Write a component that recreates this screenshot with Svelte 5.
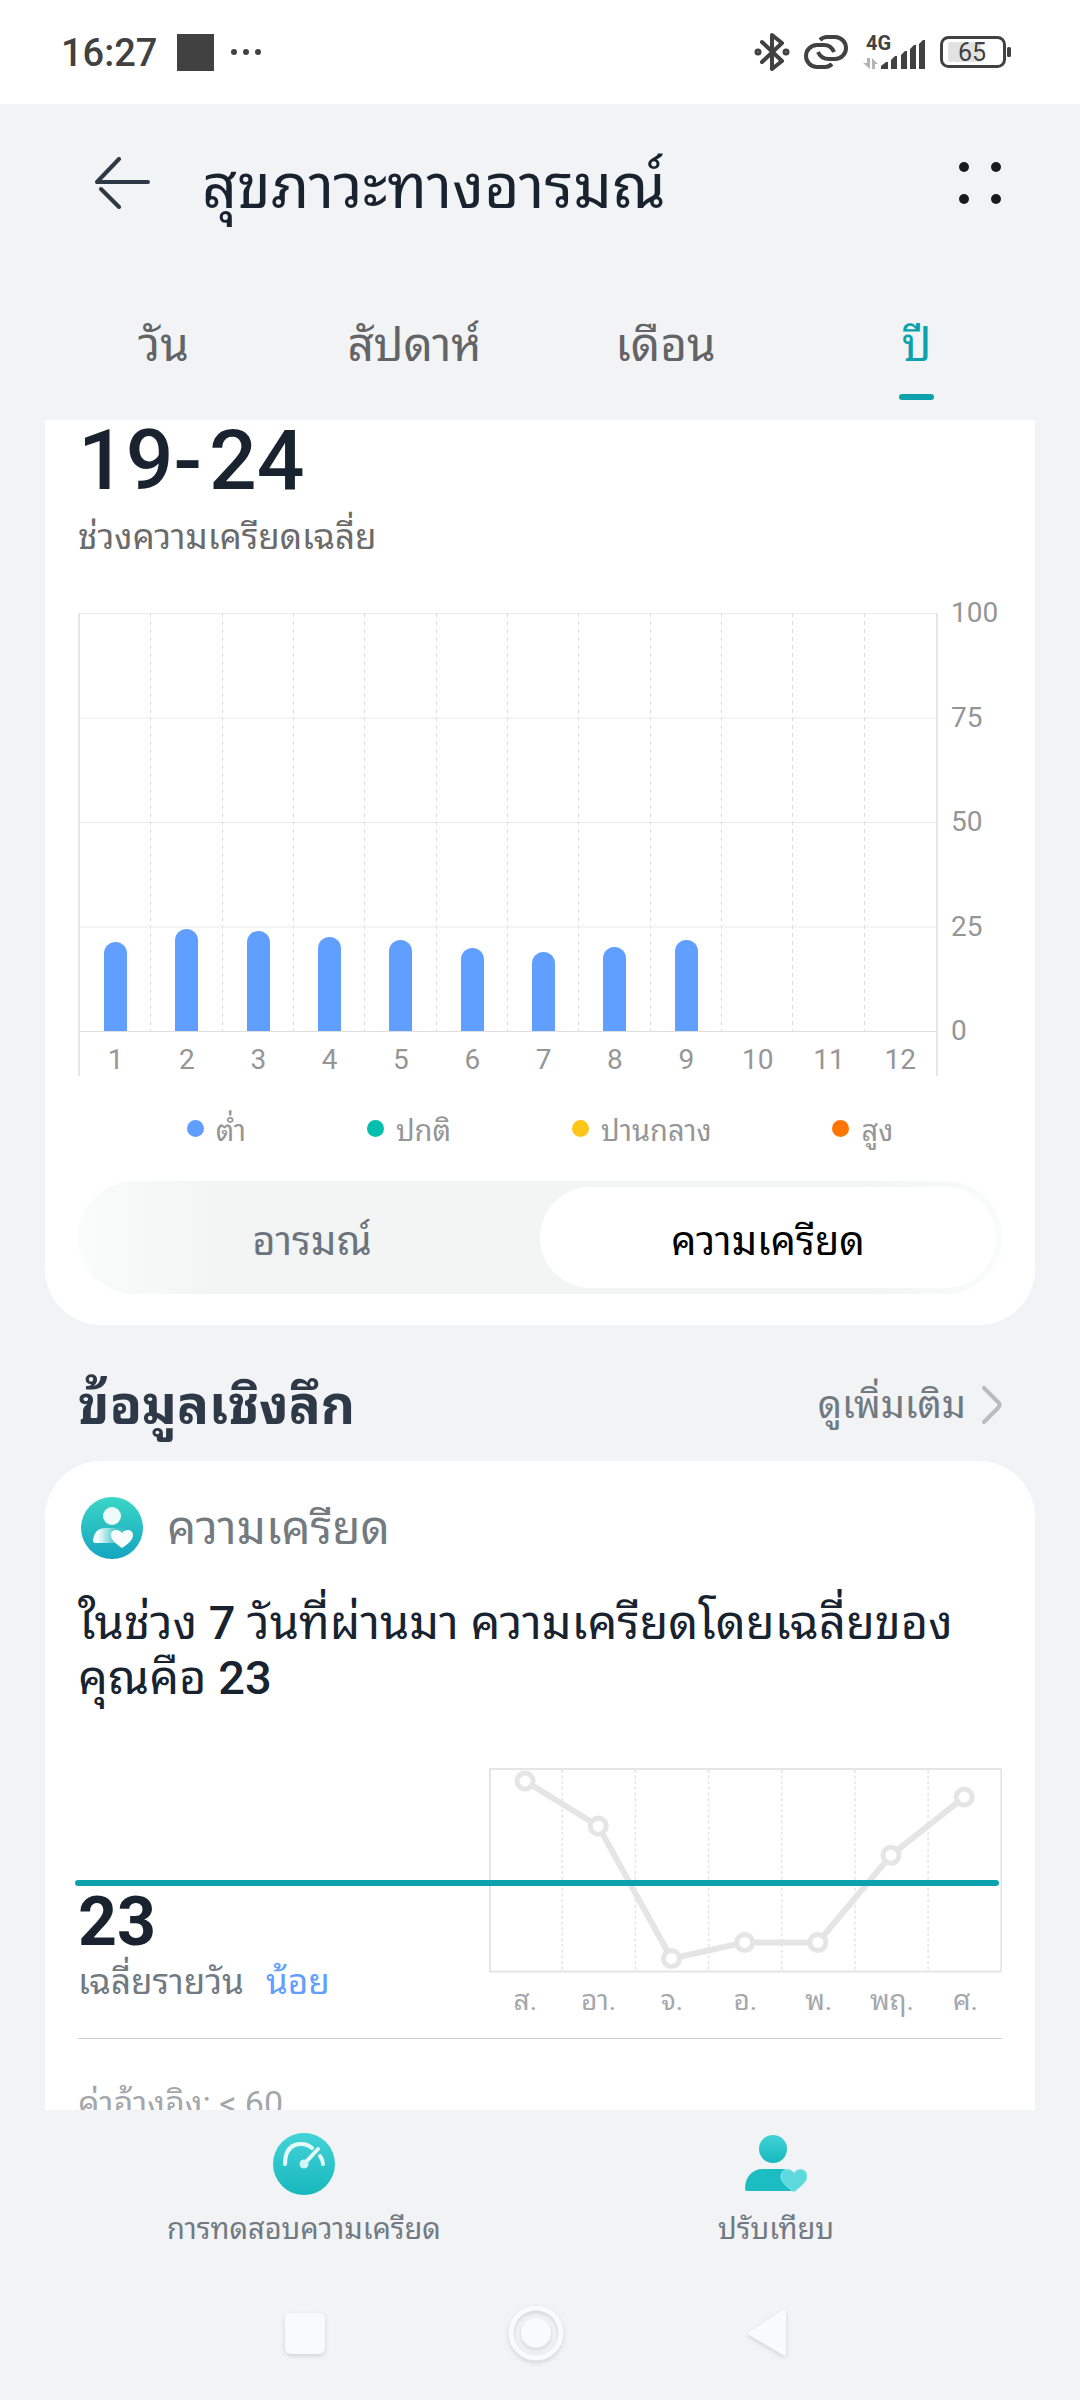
<script>
  const tabs = ['วัน', 'สัปดาห์', 'เดือน', 'ปี'];
  let activeTab = $state(3);

  const maxStress = 100;
  const months = [
    { label: '1', value: 21.4 },
    { label: '2', value: 24.3 },
    { label: '3', value: 23.9 },
    { label: '4', value: 22.5 },
    { label: '5', value: 21.7 },
    { label: '6', value: 19.8 },
    { label: '7', value: 18.8 },
    { label: '8', value: 20 },
    { label: '9', value: 21.7 },
    { label: '10', value: 0 },
    { label: '11', value: 0 },
    { label: '12', value: 0 }
  ];
  const ticks = [100, 75, 50, 25, 0];

  const levels = [
    { label: 'ต่ำ', tone: 'low' },
    { label: 'ปกติ', tone: 'normal' },
    { label: 'ปานกลาง', tone: 'medium' },
    { label: 'สูง', tone: 'high' }
  ];

  const modes = ['อารมณ์', 'ความเครียด'];
  let activeMode = $state(1);

  const week = [
    { label: 'ส.', x: 36, y: 13 },
    { label: 'อา.', x: 109, y: 58 },
    { label: 'จ.', x: 182, y: 190 },
    { label: 'อ.', x: 255, y: 174 },
    { label: 'พ.', x: 328, y: 174 },
    { label: 'พฤ.', x: 401, y: 87 },
    { label: 'ศ.', x: 474, y: 29 }
  ];
  const weekLine = week.map((d) => `${d.x},${d.y}`).join(' ');
  const weekGrid = [73, 146, 219, 292, 365, 438];
</script>

<div class="app">
  <div class="status">
    <div class="status-left">
      <span class="clock">16:27</span>
      <span class="block"></span>
      <svg width="32" height="8" viewBox="0 0 32 8" fill="#414141">
        <circle cx="4" cy="4" r="3" /><circle cx="16" cy="4" r="3" /><circle cx="28" cy="4" r="3" />
      </svg>
    </div>
    <div class="status-right">
      <svg width="36" height="40" viewBox="0 0 36 40" fill="none" stroke="#414141" stroke-width="4" stroke-linejoin="round" stroke-linecap="round">
        <path d="M8 10 L28 29 L18 37 V3 L28 11 L8 30" />
        <circle cx="4" cy="20" r="1.5" /><circle cx="32" cy="20" r="1.5" />
      </svg>
      <svg width="44" height="34" viewBox="0 0 44 34" fill="none" stroke="#414141" stroke-width="4">
        <path d="M16 5 Q19 2 23 2 H31 A11 11 0 0 1 31 24 H25 Q17 24 14 17" />
        <path d="M28 29 Q25 32 21 32 H13 A11 11 0 0 1 13 10 H20 Q27 10 30 17" />
      </svg>
      <div class="signal">
        <svg width="64" height="34" viewBox="0 0 64 34" fill="#414141">
          <path fill="#b4b4b4" d="M5 23h3v11L1 28h4zM10 34V23l6 6h-3v5z" />
          <path d="M19 34v-3l5-4h2v7zM29 34V25l4-4h2v13zM39 34V20l4-4h2v18zM48 34V14l4-4h2v24zM57 34V9l4-4h2v29z" />
        </svg>
        <span class="net">4G</span>
      </div>
      <div class="battery">
        <svg width="72" height="32" viewBox="0 0 72 32">
          <rect x="8" y="6" width="33" height="20" rx="2" fill="#e2e2e2" />
          <rect x="1.5" y="1.5" width="63" height="29" rx="7" fill="none" stroke="#414141" stroke-width="3" />
          <rect x="67" y="11" width="4" height="10" rx="1.5" fill="#414141" />
        </svg>
        <span class="charge">65</span>
      </div>
    </div>
  </div>

  <header class="header">
    <button class="icon-btn" aria-label="ย้อนกลับ">
      <svg width="56" height="52" viewBox="0 0 56 52" fill="none" stroke="#2e3945" stroke-width="4" stroke-linecap="round">
        <path d="M24 2 L2 25 H53" stroke-linejoin="round" /><path d="M6 32 L24 50" />
      </svg>
    </button>
    <h1>สุขภาวะทางอารมณ์</h1>
    <button class="icon-btn" aria-label="เมนู">
      <svg width="44" height="44" viewBox="0 0 44 44" fill="#1a1a1a">
        <circle cx="6" cy="6" r="5" /><circle cx="38" cy="6" r="5" /><circle cx="6" cy="38" r="5" /><circle cx="38" cy="38" r="5" />
      </svg>
    </button>
  </header>

  <nav class="tabs">
    {#each tabs as tab, i}
      <button class="tab" class:active={i === activeTab} onclick={() => (activeTab = i)}>
        <span>{tab}</span>
        <i></i>
      </button>
    {/each}
  </nav>

  <main class="content">
    <section class="card summary">
      <div class="range"><span>19-</span><span>24</span></div>
      <p class="caption">ช่วงความเครียดเฉลี่ย</p>

      <div class="chart">
        <div class="plot">
          <div class="bars">
            {#each months as m}
              <div class="slot">
                <div class="bar" style="height: {(m.value / maxStress) * 100}%"></div>
              </div>
            {/each}
          </div>
          <div class="months">
            {#each months as m}<span>{m.label}</span>{/each}
          </div>
        </div>
        <div class="scale">
          {#each ticks as t}<span>{t}</span>{/each}
        </div>
      </div>

      <ul class="legend">
        {#each levels as l}
          <li><i class={l.tone}></i>{l.label}</li>
        {/each}
      </ul>

      <div class="switch">
        {#each modes as mode, i}
          <button class:on={i === activeMode} onclick={() => (activeMode = i)}>{mode}</button>
        {/each}
      </div>
    </section>

    <div class="section-head">
      <h2>ข้อมูลเชิงลึก</h2>
      <a href="#insights">
        ดูเพิ่มเติม
        <svg width="20" height="38" viewBox="0 0 20 38" fill="none" stroke="#b9bcbf" stroke-width="4" stroke-linecap="round">
          <path d="M2 2 L16 16 Q19 19 16 22 L2 36" />
        </svg>
      </a>
    </div>

    <section class="card insight" id="insights">
      <div class="insight-head">
        <svg width="62" height="62" viewBox="0 0 62 62">
          <defs>
            <linearGradient id="disc" x1="0" y1="0" x2="0" y2="1">
              <stop offset="0" stop-color="#3bd6c6" /><stop offset="1" stop-color="#14a5c0" />
            </linearGradient>
            <linearGradient id="bust" x1="0" y1="0" x2="1" y2="0">
              <stop offset="0.15" stop-color="#f4fdfd" /><stop offset="0.75" stop-color="#f4fdfd" stop-opacity="0.1" />
            </linearGradient>
          </defs>
          <circle cx="31" cy="31" r="31" fill="url(#disc)" />
          <circle cx="31" cy="19" r="9" fill="#effbfb" />
          <path d="M12 44 Q13 31 25 31 H38 Q42 31 45 34 V46 H14 Q12 46 12 44Z" fill="url(#bust)" />
          <path d="M41 51 C34 46 30 43 30 38 C30 33 37 31 41 36 C45 31 52 33 52 38 C52 43 47 47 41 51Z" fill="#f8fefe" />
        </svg>
        <h3>ความเครียด</h3>
      </div>

      <p class="message">ในช่วง <b>7</b> วันที่ผ่านมา ความเครียดโดยเฉลี่ยของ<wbr /><span class="keep">คุณคือ <b>23</b></span></p>

      <div class="week">
        <div class="average">
          <strong>23</strong>
          <p>เฉลี่ยรายวัน <em>น้อย</em></p>
        </div>
        <div class="trend">
          <svg viewBox="0 0 512 204" fill="none" stroke="#e5e5e5">
            <rect x="1" y="1" width="510" height="202" stroke-width="2" />
            {#each weekGrid as x}
              <line x1={x} x2={x} y1="2" y2="202" stroke-width="1.5" stroke-dasharray="3 2.6" />
            {/each}
            <polyline points={weekLine} stroke-width="6" />
            {#each week as d}
              <circle cx={d.x} cy={d.y} r="8" fill="#fff" stroke-width="5" />
            {/each}
          </svg>
          <div class="days">
            {#each week as d}<span>{d.label}</span>{/each}
          </div>
        </div>
        <div class="mean-line"></div>
      </div>

      <p class="reference">ค่าอ้างอิง: &lt; 60</p>
    </section>
  </main>

  <footer>
    <div class="actions">
      <button>
        <svg width="62" height="62" viewBox="0 0 62 62">
          <defs>
            <linearGradient id="teal" x1="0" y1="0" x2="0" y2="1">
              <stop offset="0" stop-color="#42d3d8" /><stop offset="1" stop-color="#17b8be" />
            </linearGradient>
          </defs>
          <circle cx="31" cy="31" r="31" fill="url(#teal)" />
          <g fill="none" stroke="#e4fafa" stroke-width="4" stroke-linecap="round">
            <path d="M12 31 C12 8 31 8 39 15" /><path d="M47 23 Q50 27 50 31" />
            <path d="M32 30 L45 16" />
          </g>
          <circle cx="31" cy="31" r="4.5" fill="#d3f5f5" />
        </svg>
        การทดสอบความเครียด
      </button>
      <button>
        <svg width="62" height="62" viewBox="0 0 62 62">
          <circle cx="28" cy="16" r="14" fill="url(#teal)" />
          <path d="M0 56 C0 44 7 36 18 36 H40 L48 58 H2 Q0 58 0 56Z" fill="#1cbcc3" />
          <path d="M49 59 C41 53 36 49 36 43 C36 36 45 34 49 40 C53 34 62 36 62 43 C62 49 56 53 49 59Z" fill="#5dd8dc" stroke="#8fe6e8" stroke-width="1" />
        </svg>
        ปรับเทียบ
      </button>
    </div>
    <div class="system">
      <button aria-label="แอปล่าสุด">
        <svg width="60" height="60" viewBox="0 0 60 60"><rect x="10" y="9" width="40" height="41" rx="6" fill="#f9fafc" /></svg>
      </button>
      <button aria-label="หน้าหลัก">
        <svg width="60" height="60" viewBox="0 0 60 60">
          <circle cx="30" cy="29" r="25" fill="none" stroke="#f9fafc" stroke-width="5" /><circle cx="30" cy="29" r="15" fill="#f9fafc" />
        </svg>
      </button>
      <button aria-label="กลับ">
        <svg width="60" height="60" viewBox="0 0 60 60"><path d="M12 28 L46 6 Q49 5 49 8 V50 Q49 53 46 51 L12 31 Q10 30 12 28Z" fill="#f9fafc" /></svg>
      </button>
    </div>
  </footer>
</div>

<style>
  :global(body) {
    background: #f1f3f5;
  }
  .app {
    display: flex;
    flex-direction: column;
    height: 100vh;
    overflow: hidden;
    background: #f1f3f5;
    color: #18232f;
    font-family: Roboto, 'Noto Sans Thai Looped', 'Noto Looped Thai', Loma, 'Noto Sans Thai', 'Noto Sans', sans-serif;
  }
  h1, h2, h3, p, ul {
    margin: 0;
    padding: 0;
    font-weight: 400;
  }
  svg {
    display: block;
    flex: none;
  }
  button {
    padding: 0;
    border: 0;
    background: none;
    font: inherit;
    color: inherit;
  }

  .status {
    flex: none;
    display: flex;
    justify-content: space-between;
    align-items: center;
    height: 104px;
    padding: 0 68px 0 61px;
    background: #fff;
    color: #414141;
  }
  .status-left, .status-right {
    display: flex;
    align-items: center;
  }
  .clock {
    margin-right: 20px;
    font-size: 38px;
    line-height: 46px;
    padding-top: 2px;
    font-weight: 500;
  }
  .block {
    width: 37px;
    height: 37px;
    margin-right: 16px;
    background: #414141;
  }
  .status-right {
    gap: 14px;
  }
  .signal, .battery {
    position: relative;
  }
  .net {
    position: absolute;
    left: 4px;
    top: 0;
    font-size: 20px;
    line-height: 16px;
    font-weight: 700;
  }
  .charge {
    position: absolute;
    left: 0;
    top: 0;
    width: 64px;
    text-align: center;
    font-size: 25px;
    line-height: 34px;
  }

  .header {
    flex: none;
    display: flex;
    align-items: center;
    height: 158px;
    padding: 0 78px 0 95px;
  }
  h1 {
    flex: 1;
    padding: 8px 0 0 51px;
    font-size: 61px;
    line-height: 72px;
  }

  .tabs {
    flex: none;
    display: grid;
    grid-template-columns: repeat(4, 1fr);
    padding: 0 38px;
  }
  .tab {
    display: flex;
    flex-direction: column;
    align-items: center;
    gap: 21px;
    padding: 55px 0 20px;
    font-size: 46px;
    line-height: 56px;
    color: #636466;
  }
  .tab i {
    width: 35px;
    height: 6px;
    border-radius: 3px;
  }
  .tab.active {
    color: #0aa3ad;
  }
  .tab.active i {
    background: #0aa3ad;
  }

  .content {
    flex: 1;
    min-height: 0;
    overflow: hidden;
    padding: 0 45px;
  }
  .card {
    background: #fff;
    padding: 0 33px;
  }
  .summary {
    border-radius: 0 0 56px 56px;
    padding-bottom: 31px;
  }
  .range {
    display: flex;
    gap: 7px;
    font-size: 84px;
    line-height: 82px;
    font-weight: 500;
  }
  .caption {
    margin-top: 12px;
    font-size: 35px;
    line-height: 48px;
    color: #6b6b6b;
  }

  .chart {
    display: grid;
    grid-template-columns: 1fr 64px;
    margin-top: 35px;
    font-size: 28px;
    line-height: 32px;
    color: #969696;
  }
  .plot {
    margin-top: 16px;
    border: solid #e6e6e6;
    border-width: 0 2px;
  }
  .bars, .months {
    display: grid;
    grid-template-columns: repeat(12, 1fr);
  }
  .bars {
    height: 418px;
    background: linear-gradient(#ebebeb 0 1px, transparent 1px) 0 0 / 100% 25%;
    border-bottom: 1px solid #dedede;
  }
  .slot {
    display: flex;
    align-items: flex-end;
    justify-content: center;
    background: repeating-linear-gradient(#dedede 0 4px, transparent 4px 8px) right / 1px 100% no-repeat;
  }
  .slot:last-child {
    background: none;
  }
  .bar {
    width: 23px;
    border-radius: 12px 12px 0 0;
    background: #609fff;
  }
  .months {
    padding-top: 12px;
    text-align: center;
  }
  .scale {
    display: flex;
    flex-direction: column;
    justify-content: space-between;
    height: 450px;
    padding-left: 13px;
  }

  .legend {
    display: flex;
    justify-content: center;
    gap: 121px;
    margin-top: 35px;
    list-style: none;
    font-size: 29px;
    line-height: 40px;
    color: #969696;
  }
  .legend li {
    display: flex;
    align-items: center;
    gap: 12px;
  }
  .legend i {
    width: 17px;
    height: 17px;
    margin-bottom: 6px;
    border-radius: 50%;
  }
  .low { background: #609fff; }
  .normal { background: #00bfae; }
  .medium { background: #ffc61a; }
  .high { background: #ff7500; }

  .switch {
    display: grid;
    grid-template-columns: 1fr 1fr;
    margin-top: 30px;
    padding: 6px;
    border-radius: 57px;
    background: linear-gradient(90deg, #fafbfb, #f3f5f5 15%, #f3f5f5 85%, #fafbfb);
    font-size: 40px;
    line-height: 93px;
    color: #6b747c;
  }
  .switch button {
    padding-top: 8px;
    border-radius: 51px;
  }
  .switch .on {
    background: #fff;
    color: #000;
  }

  .section-head {
    display: flex;
    justify-content: space-between;
    align-items: center;
    padding: 24px 33px 0;
    height: 112px;
  }
  h2 {
    padding-top: 2px;
    font-size: 53px;
    line-height: 64px;
    font-weight: 700;
    color: #2e3948;
  }
  .section-head a {
    display: flex;
    align-items: center;
    gap: 16px;
    font-size: 38px;
    line-height: 48px;
    color: #717a82;
    text-decoration: none;
  }

  .insight {
    padding-top: 36px;
    padding-bottom: 36px;
    border-radius: 56px 56px 0 0;
  }
  .insight-head {
    display: flex;
    align-items: center;
    gap: 24px;
    padding-left: 3px;
  }
  h3 {
    font-size: 46px;
    line-height: 56px;
    color: #747b80;
  }
  .message {
    margin-top: 36px;
    font-size: 47px;
    line-height: 55px;
  }
  .message b {
    font-weight: 500;
  }
  .keep {
    white-space: nowrap;
  }
  .week {
    position: relative;
    display: grid;
    grid-template-columns: 4fr 5fr;
    margin-top: 63px;
    padding-bottom: 21px;
    border-bottom: 1px solid #d0d1d2;
  }
  .mean-line {
    position: absolute;
    left: -3px;
    right: 3px;
    top: 112px;
    height: 6px;
    border-radius: 3px;
    background: #0aa3ad;
  }
  .average {
    padding-top: 122px;
  }
  .average strong {
    display: block;
    font-size: 68px;
    line-height: 64px;
    font-weight: 700;
  }
  .average p {
    display: flex;
    gap: 22px;
    margin-top: 7px;
    font-size: 35px;
    line-height: 44px;
    color: #717a82;
  }
  .average em {
    font-style: normal;
    color: #609fff;
  }
  .days {
    display: grid;
    grid-template-columns: repeat(7, 1fr);
    margin-top: 12px;
    text-align: center;
    font-size: 28px;
    line-height: 32px;
    color: #a4a8ac;
  }
  .reference {
    margin-top: 42px;
    font-size: 34px;
    line-height: 44px;
    color: #a4a8ac;
  }

  footer {
    flex: none;
  }
  .actions {
    display: grid;
    grid-template-columns: 1fr 1fr;
    padding: 23px 68px 0;
  }
  .actions button {
    display: flex;
    flex-direction: column;
    align-items: center;
    gap: 16px;
    font-size: 29px;
    line-height: 36px;
    color: #717a82;
  }
  .system {
    display: grid;
    grid-template-columns: repeat(3, 1fr);
    align-items: center;
    height: 132px;
    margin-top: 21px;
    padding: 0 198px 0 189px;
  }
  .system button {
    display: flex;
    justify-content: center;
    filter: drop-shadow(0 2px 2px #00000022);
  }
</style>
